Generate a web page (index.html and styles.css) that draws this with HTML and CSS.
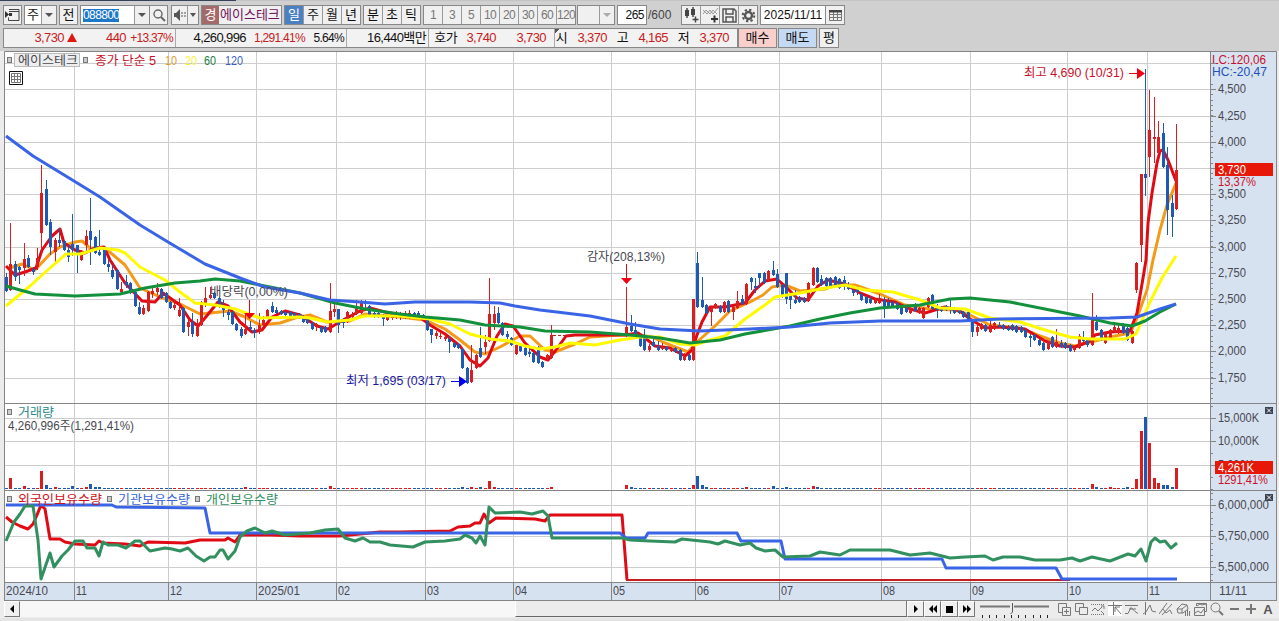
FILE: index.html
```
<!DOCTYPE html>
<html lang="ko">
<head>
	<meta charset="UTF-8">
	<title>에이스테크 차트</title>
	<link rel="stylesheet" href="styles.css">
</head>
<body>
<!-- 상단 도구모음 -->
<div class="toolbar">
	<div class="box w19"><svg width="15" height="14" viewBox="0 0 15 14"><path d="M4 1.5h10v11H3.500v-3M4 3.500h10" fill="none" stroke="#444"/><path d="M0 3v7l4-3.500zM4 5h3v3H4z" fill="#333"/></svg></div>
	<div class="box combo g1"><span>주</span><i class="arrow"></i></div>
	<div class="box w19 g1">전</div>
	<div class="box code g1"><span class="sel">088800</span><i class="arrow"></i></div>
	<div class="box w19 join"><svg width="14" height="14" viewBox="0 0 14 14" fill="none" stroke="#666"><circle cx="6" cy="6" r="4" stroke-width="1.400"/><path d="M9 9l4 4" stroke-width="2"/></svg></div>
	<div class="box sound g2"><svg width="14" height="14" viewBox="0 0 14 14"><path d="M1 5h2l4-4v12L3 9H1z" fill="#555"/><path d="M9 4v6M12 4v6" stroke="#555" stroke-dasharray="2 1"/></svg><i class="arrow small"></i></div>
	<div class="box name g1"><b>경</b><span>에이스테크</span></div>
	<div class="group g1"><span class="on">일</span><span>주</span><span>월</span><span>년</span></div>
	<div class="group g1"><span>분</span><span>초</span><span>틱</span></div>
	<div class="group nums g1"><span>1</span><span>3</span><span>5</span><span>10</span><span>20</span><span>30</span><span>60</span><span>120</span></div>
	<div class="box minute"><i class="arrow off"></i></div>
	<div class="box count g1">265</div>
	<div class="total">/600</div>
	<div class="group icons">
		<span><svg width="17" height="16" viewBox="0 0 17 16"><path d="M2 3h4v6H2zM8 2h4v6H8z" fill="#444"/><path d="M4 1v10M10 0v10M9.500 12.500h6M12.500 9.500v6" stroke="#444" stroke-width="1.500"/></svg></span>
		<span><svg width="17" height="16" viewBox="0 0 17 16"><path d="M1 3l4 4 3-4 3 4 5-6M1 7l3-4 4 4 3-4 4 4" fill="none" stroke="#888" stroke-width=".8"/><path d="M9 12h7M12.500 8.500v7" stroke="#333" stroke-width="2"/></svg></span>
		<span><svg width="15" height="15" viewBox="0 0 15 15" fill="none" stroke="#555" stroke-width="1.500"><path d="M1 1h11l2 2v11H1zM4 1v5h7V1M4 14V9h7v5"/></svg></span>
		<span><svg width="15" height="15" viewBox="0 0 15 15" fill="none" stroke="#555"><circle cx="7.500" cy="7.500" r="3.500" stroke-width="2.400"/><circle cx="7.500" cy="7.500" r="5.800" stroke-width="2" stroke-dasharray="2.300 2.250"/></svg></span>
	</div>
	<div class="box date g1"><span>2025/11/11</span></div>
	<div class="box w20 join"><svg width="13" height="12" viewBox="0 0 13 12"><path d="M.5 1.500h12v10H.5zM.5 5.500h12M.5 8.500h12M4.500 3v9M8.500 3v9" fill="none" stroke="#777"/><path d="M0 1h13v2.500H0z" fill="#444"/></svg></div>
</div>
<!-- 현재가 -->
<div class="quotes">
	<div class="quote">
		<span class="up">3,730</span><span class="up tri"><svg width="10" height="9" viewBox="0 0 10 9"><path d="M5 0l5 9H0z" fill="#e01810"/></svg></span><span class="up">440</span><span class="up end pct">+13.37%</span>
		<span>4,260,996</span><span class="up pct">1,291.41%</span><span class="end pct">5.64%</span>
		<span class="end">16,440백만</span>
		<span>호가</span><span class="up">3,740</span><span class="up">3,730</span><span class="end"></span>
		<span class="mark">시</span><span class="up">3,370</span><span>고</span><span class="up">4,165</span><span>저</span><span class="up">3,370</span>
	</div>
	<div class="box buy">매수</div>
	<div class="box sell">매도</div>
	<div class="box w20">평</div>
</div>
<!-- 차트 -->
<svg class="chart" width="1279" height="550" viewBox="0 51 1279 550">
	<rect x="4" y="51" width="1206" height="532" fill="#fff"/>
	<rect x="1210" y="51" width="66" height="550" class="side"/>
	<rect x="4" y="583" width="1207" height="18" class="side"/>
	<g id="grid"></g>
	<g id="volume"></g>
	<!-- 이동평균선 5, 10 -->
	<g class="line">
		<polyline stroke="#f59a18" points="10,268 22,264 35,270 50,254 60,247 75,242 82,241 90,248 105,248 125,265 140,288 160,297 180,304 200,314 230,311 245,317 260,325 280,323 295,318 310,315 327,322 350,321 365,314 400,317 425,320 445,329 460,340 475,352 485,354 500,347 520,336 530,336 545,350 555,352 575,344 590,337 620,335 640,335 652,337 665,343 688,352 697,342 715,326 730,311 750,302 763,295 772,287 785,285 800,291 825,289 835,285 855,285 880,294 905,305 930,309 955,310 970,315 990,325 1020,328 1040,336 1060,343 1075,346 1095,341 1115,336 1130,333 1137,318 1147,290 1153,260 1160,230 1167,205 1176,183"/>
		<polyline stroke="#e00a14" points="6,266 15,275 25,272 36,268 42,250 52,236 60,229 64,243 75,250 85,253 95,248 104,247 110,260 125,283 142,301 155,302 163,293 180,305 190,320 198,326 205,318 218,302 228,306 240,322 252,332 262,330 272,317 285,311 300,315 317,326 328,329 345,319 360,311 370,308 385,312 400,315 420,317 430,325 445,334 460,346 470,360 480,366 488,358 497,336 505,324 513,326 525,343 540,357 548,360 556,350 566,336 575,335 625,335 638,333 645,338 655,346 670,348 685,356 692,350 697,335 702,322 710,307 725,307 745,303 755,290 765,281 777,279 787,288 797,298 808,300 818,286 828,280 845,284 860,293 875,299 895,302 910,309 925,313 945,307 960,311 970,319 985,328 1000,327 1025,329 1045,341 1060,346 1075,347 1090,341 1095,335 1110,332 1130,331 1137,313 1142,284 1146,260 1148,223 1152,193 1157,163 1160,151 1163,150 1168,160 1176,181"/>
	</g>
	<g id="candles"></g>
	<path d="M553 335.500H575" stroke="#c02020" stroke-dasharray="3 2"/>
	<!-- 이동평균선 20, 60, 120 -->
	<g class="line">
		<polyline stroke="#fffa00" points="6,306 30,286 50,268 66,254 80,254 100,248 118,250 125,253 140,267 165,280 180,292 195,303 215,305 235,309 260,318 300,317 310,318 327,322 350,320 365,316 400,316 430,319 450,324 470,334 490,339 510,341 525,346 540,349 555,347 570,343 595,345 620,340 640,337 660,337 680,344 695,345 710,340 725,336 745,319 765,305 775,297 800,293 820,289 845,285 865,290 893,292 920,300 940,308 965,309 990,318 1020,322 1045,330 1070,337 1090,339 1125,339 1136,334 1150,302 1162,278 1176,256"/>
		<polyline stroke="#12903c" points="6,286 20,290 35,294 75,296 120,294 145,288 175,283 200,281 215,279 240,281 265,286 300,293 335,303 365,309 400,314 425,317 460,320 485,325 520,327 545,331 590,332 630,335 660,338 690,343 720,340 745,334 790,326 820,319 850,313 880,308 920,305 950,299 970,298 1010,302 1050,310 1080,316 1110,323 1132,326 1145,321 1160,312 1176,304"/>
		<polyline stroke="#3a64e6" points="6,136 33,156 74,181 100,197 140,225 168,242 205,264 240,278 265,287 300,293 330,300 360,302 385,304 415,302 470,302 500,303 515,306 540,310 590,316 630,324 660,329 700,331 750,329 790,327 830,323 880,321 960,321 1000,319 1110,318 1137,317 1160,309 1176,304"/>
	</g>
	<!-- 보유수량 -->
	<g class="line">
		<polyline stroke="#e00a14" points="6,517 12,522 20,526 28,529 33,524 37,515 41,505 45,509 50,539 60,539 65,542 75,544 95,545 99,541 103,543 125,544 140,546 148,542 185,543 200,540 225,540 228,538 235,542 240,535 270,535 300,536 340,536 360,534 380,532 400,532 450,531 458,527 470,526 475,523 480,523 484,514 489,523 496,518 535,519 545,521 550,515 622,515 627,580"/>
		<path d="M626 580H1070" stroke="#c41e1e" stroke-width="2"/>
		<polyline stroke="#3a64e6" points="6,505 112,505 116,507 205,508 210,533 620,533 626,538 645,538 648,533 737,533 741,541 781,541 785,559 942,559 946,568 1056,568 1062,579 1177,579"/>
		<polyline stroke="#329060" points="6,541 14,522 20,514 25,506 33,506 38,540 41,579 50,553 54,567 62,556 68,550 75,541 83,541 87,548 95,548 99,556 103,542 108,545 118,545 126,548 135,541 140,541 150,551 165,548 172,549 180,551 188,548 196,556 204,561 210,557 215,557 220,550 223,550 228,559 235,551 240,537 247,531 255,528 265,533 272,531 285,535 310,533 325,530 338,529 345,538 355,541 363,538 370,542 380,542 390,545 413,547 425,542 445,541 460,539 465,535 472,538 476,543 480,536 485,545 489,507 495,513 520,512 532,514 543,511 548,516 552,538 622,538 630,540 650,541 675,542 682,539 710,542 718,544 725,541 740,545 750,543 756,548 765,551 775,550 783,557 810,556 820,552 840,555 850,550 890,550 910,555 930,553 950,558 965,557 985,556 993,560 1003,557 1020,557 1035,560 1060,560 1072,558 1080,561 1092,557 1110,561 1128,554 1135,556 1141,549 1146,561 1151,542 1155,538 1160,542 1165,541 1171,548 1177,543"/>
	</g>
	<!-- 구획선 -->
	<path class="frame" d="M4.500 601V51.500H1276.500V601M4 403.500H1276M4 490.500H1276M4 582.500H1276M4 600.500H1276M1210.500 51V600"/>
	<!-- 범례 -->
	<rect x="14.500" y="53.500" width="65" height="13" fill="#eee" stroke="#bbb"/>
	<g class="bullet"><rect x="7.500" y="57.500" width="4" height="5"/><rect x="83.500" y="57.500" width="4" height="5"/><rect x="7.500" y="409.500" width="4" height="5"/><rect x="7.500" y="496.500" width="4" height="5"/><rect x="107.500" y="496.500" width="4" height="5"/><rect x="195.500" y="496.500" width="4" height="5"/></g>
	<g class="label">
		<text x="18" y="65" textLength="60">에이스테크</text>
		<text x="95" y="65" textLength="61" fill="#c8102a">종가 단순 5</text>
		<text x="165" y="65" textLength="12" fill="#e09a30">10</text>
		<text x="185" y="65" textLength="12" fill="#f8f040">20</text>
		<text x="204" y="65" textLength="12" fill="#208040">60</text>
		<text x="225" y="65" textLength="18" fill="#3a5ec0">120</text>
		<text x="18" y="417" textLength="36" fill="#2e8b8b">거래량</text>
		<text x="8" y="430" textLength="126">4,260,996주(1,291,41%)</text>
		<text x="18" y="504" textLength="84" fill="#d01020">외국인보유수량</text>
		<text x="118" y="504" textLength="72" fill="#3a64d6">기관보유수량</text>
		<text x="206" y="504" textLength="72" fill="#329060">개인보유수량</text>
		<text x="1024" y="77" textLength="100" fill="#c8102a">최고 4,690 (10/31)</text>
		<text x="346" y="385" textLength="100" fill="#1a1aa0">최저 1,695 (03/17)</text>
		<text x="587" y="261" textLength="78">감자(208,13%)</text>
		<text x="210" y="296" textLength="78">배당락(0,00%)</text>
		<text x="1212" y="64" textLength="54" fill="#c8102a">LC:120,06</text>
		<text x="1212" y="76" textLength="55" fill="#2050b8">HC:-20,47</text>
	</g>
	<path d="M1129 73.500h10M626.500 264v16M249.500 300v14" stroke="#e00a14"/>
	<path d="M1137 68l8 5.500-8 5.500zM621 278h11l-5.500 6zM244 313h11l-5.500 6z" fill="#f00010"/>
	<path d="M451 381.500h10" stroke="#0000d0"/>
	<path d="M459 376l8 5.500-8 5.500z" fill="#0000f0"/>
	<!-- 표 보기 단추 -->
	<path d="M9.500 71.500h13v13h-13z" fill="#fff" stroke="#111"/>
	<path d="M11.500 73.500h9v9h-9zM11.500 76.500h9M11.500 79.500h9M14.500 74v9M17.500 74v9" fill="none" stroke="#777"/>
	<g id="axis" class="label"></g>
	<!-- 현재값 표시 -->
	<rect x="1215" y="163" width="58" height="13" fill="#e81808"/>
	<rect x="1215" y="461" width="58" height="13" fill="#e81808"/>
	<g class="label">
		<text x="1218" y="174" textLength="28" fill="#fff">3,730</text>
		<text x="1218" y="186" textLength="38" fill="#c8102a">13,37%</text>
		<text x="1218" y="472" textLength="36" fill="#fff">4,261K</text>
		<text x="1218" y="484" textLength="50" fill="#c8102a">1291,41%</text>
	</g>
	<path d="M1265 407h8v7h-8zM1265 494h8v7h-8z" fill="#3c4450"/>
	<path d="M1267 408.500l4 4m0-4l-4 4M1267 495.500l4 4m0-4l-4 4" stroke="#fff"/>
</svg>
<!-- 하단 스크롤 -->
<div class="footer">
	<div class="scroll">
		<div class="btn"><svg width="6" height="8" viewBox="0 0 6 8"><path d="M5 0v8L1 4z"/></svg></div>
		<div class="track"></div>
		<div class="thumb"></div>
		<div class="btn"><svg width="6" height="8" viewBox="0 0 6 8"><path d="M1 0v8l4-4z"/></svg></div>
		<div class="btn"><svg width="10" height="8" viewBox="0 0 10 8"><path d="M5 0v8L1 4zM9 0v8L5 4z"/></svg></div>
		<div class="btn"><svg width="7" height="7" viewBox="0 0 7 7"><path d="M0 0h7v7H0z"/></svg></div>
		<div class="btn"><svg width="10" height="8" viewBox="0 0 10 8"><path d="M1 0v8l4-4zM5 0v8l4-4z"/></svg></div>
	</div>
	<svg class="slider" width="70" height="18" viewBox="0 0 70 18" fill="none"><path d="M0 5.500h30M34 5.500h35" stroke="#777" stroke-width="2"/><path d="M32.500 2v9l-2 2" stroke="#555"/><path d="M2.500 14v3M9.500 14v3M16.500 14v3M24.500 14v3M31.500 14v3M38.500 14v3M45.500 14v3M53.500 14v3M60.500 14v3M67.500 14v3" stroke="#222"/></svg>
	<div class="tools">
		<svg viewBox="0 0 14 14"><path d="M5 10.500H1.500v-9h8V5M5.500 5.500h8v8h-8zM9.500 7v5M7 9.500h5"/></svg>
		<svg viewBox="0 0 14 14"><path d="M5 9.500H1.500v-8h8V5M5.500 5.500h8v7h-8z"/></svg>
		<svg viewBox="0 0 14 14"><path d="M0 2.500h13M0 12.500h13" stroke-dasharray="1 1"/><path d="M1 9l3-3 3 3 4-4M10 4h3v3M10 9l3 3"/></svg>
		<svg class="picked" viewBox="0 0 14 14"><path d="M0 3.500h14M5.500 0v13M7 5l6 7M7 5v5M7 5h5"/></svg>
		<svg viewBox="0 0 14 14"><path d="M0 3.500h13M0 11.500h3l3-6 4 4 3 2M4 7h7"/></svg>
		<svg viewBox="0 0 14 14"><path d="M3.500 0v13M1 12l3-2 4-7 2 6 4 1"/></svg>
		<svg viewBox="0 0 14 14"><path d="M0 12L8 1M3 13L13 2M4 7l3 4 4-3 2 4"/></svg>
		<svg viewBox="0 0 14 14"><path d="M1 7l5-5 5 1 1 4-5 4H2zM1 7h5l5-4M6 7v4M9.500 9v5M11.500 8v6M13.500 9v5"/></svg>
		<svg viewBox="0 0 14 14"><path d="M3.500 4V1.500h10v8H12M1.500 5.500h10v8h-10zM2 11l3-2 3 2 3-4M4 4l3-2 2 1 4-1"/></svg>
		<svg viewBox="0 0 14 14"><circle cx="5.500" cy="5.500" r="4.500"/><path d="M9 9l4 4" stroke-width="2"/></svg>
		<svg viewBox="0 0 14 14"><path d="M3 7h9" stroke-width="2"/></svg>
		<svg viewBox="0 0 14 14"><path d="M2 7h10M7 2v10" stroke-width="2"/></svg>
		<span>A</span>
	</div>
</div>
<script src="chart.js"></script>
</body>
</html>
```
FILE: styles.css
```
* {
	box-sizing: border-box;
}
body {
	margin: 0;
	background: #ececec;
	font-family: "Liberation Sans", "Noto Sans CJK KR", sans-serif;
	font-size: 13px;
	line-height: 18px;
	color: #111;
	overflow: hidden;
}
/* 상단 도구모음 */
.toolbar {
	display: flex;
	height: 28px;
	padding: 5px 0 3px 3px;
	background: linear-gradient(to right, #36425c 236px, #c4c4c4 236px) top / 100% 1px no-repeat #d0d0d0;
}
.box {
	display: flex;
	align-items: center;
	justify-content: center;
	height: 20px;
	border: 1px solid #888;
	background: #f0f0f0;
	white-space: nowrap;
}
.w19 { width: 19px; }
.w20 { width: 20px; }
.g1 { margin-left: 2px; }
.g2 { margin-left: 3px; }
.join { margin-left: -1px; }
.arrow {
	display: flex;
	align-items: center;
	justify-content: center;
	width: 15px;
	height: 18px;
	border-left: 1px solid #999;
	background: #f0f0f0;
}
.arrow:after {
	content: "";
	border: 4px solid transparent;
	border-top: 4px solid #555;
	border-bottom: 0;
}
.arrow.small { width: 11px; }
.arrow.small:after { border-width: 4px 3px 0; }
.arrow.off:after { border-top-color: #aaa; }
.combo {
	width: 33px;
	background: #fff;
}
.combo span {
	flex: 1;
	text-align: center;
}
.code {
	width: 70px;
	background: #fff;
	justify-content: space-between;
	padding-left: 2px;
}
.sel {
	background: #1e78c8;
	color: #fff;
	font-size: 12px;
	line-height: 13px;
	letter-spacing: -0.6px;
}
.sound { width: 28px; }
.name {
	width: 81px;
	color: #701060;
	justify-content: flex-start;
}
.name b {
	width: 17px;
	background: #a46a6a;
	color: #fff;
	font-weight: normal;
	text-align: center;
}
.name span { margin-left: 1px; }
.group {
	display: flex;
	height: 20px;
	border: 1px solid #888;
	background: #f0f0f0;
}
.group span {
	display: flex;
	align-items: center;
	justify-content: center;
	width: 19px;
	border-right: 1px solid #999;
}
.group span:last-child {
	width: 18px;
	border-right: 0;
}
.group .on {
	background: #4a80c4;
	color: #fff;
}
.nums span {
	color: #777;
	font-size: 12px;
	letter-spacing: -0.6px;
}
.minute {
	width: 38px;
	margin-left: 1px;
	justify-content: flex-end;
}
.count {
	width: 30px;
	background: #fff;
	justify-content: flex-end;
	padding-right: 2px;
	font-size: 12px;
	letter-spacing: -0.5px;
}
.total {
	width: 34px;
	padding: 1px 0 0 1px;
	font-size: 12px;
	color: #444;
}
.icons span { overflow: hidden; }
.date {
	width: 66px;
	background: #fff;
	font-size: 12px;
}
/* 현재가 줄 */
.quotes {
	display: flex;
	height: 23px;
	padding-left: 3px;
	background: #d0d0d0;
}
.quote {
	display: grid;
	grid-template-columns: 60px 14px 48px 50px 70px 59px 42px 82px 28px 39px 50px 9px 12px 40px 21px 40px 21px 40px;
	width: 735px;
	height: 20px;
	border: 1px solid #888;
	background: #f2f2f2;
	text-align: right;
	letter-spacing: -0.6px;
	white-space: nowrap;
}
.quote .up { color: #c82020; }
.quote .pct {
	font-size: 12px;
	letter-spacing: -0.7px;
}
.quote .tri {
	padding-right: 1px;
}
.quote .end {
	padding-right: 2px;
	border-right: 1px solid #aaa;
}
.mark { background: linear-gradient(135deg, #555 3px, transparent 3px); }
.buy {
	width: 39px;
	background: #f8cfcb;
}
.sell {
	width: 39px;
	background: #c4daf4;
	margin-right: 2px;
	margin-left: 1px;
}
/* 차트 */
.chart {
	display: block;
}
.side { fill: #d7e2f0; }
.frame {
	fill: none;
	stroke: #858585;
}
.line {
	fill: none;
	stroke-width: 3;
	stroke-linejoin: round;
}
.label {
	fill: #484850;
	font-size: 12.5px;
}
.bullet rect {
	fill: #ccc;
	stroke: #777;
}
.grid { stroke: #cdcdcd; }
.tick { stroke: #858585; }
.rise { fill: #d81e1e; }
.fall { fill: #1e5ab4; }
/* 하단 */
.footer {
	display: flex;
	height: 20px;
	background: #ececec;
	border-bottom: 3px solid #e4e4e4;
}
.scroll {
	display: flex;
	width: 971px;
	margin-left: 4px;
	height: 16px;
}
.btn {
	display: flex;
	align-items: center;
	justify-content: center;
	width: 17px;
	background: #f0f0f0;
	border: 1px solid #fff;
	border-right-color: #777;
	border-bottom-color: #777;
}
.btn:first-child { width: 16px; }
.track {
	width: 495px;
	background: #f7f7f7;
}
.thumb {
	flex: 1;
	background: #ececec;
	border-left: 1px solid #fff;
	border-right: 1px solid #777;
	border-bottom: 1px solid #666;
}
.slider { margin-left: 5px; }
.tools {
	display: flex;
	gap: 3px;
	margin-left: 7px;
	padding-top: 1px;
}
.tools svg {
	width: 14px;
	height: 14px;
	fill: none;
	stroke: #777;
}
.tools .picked {
	background: #fff;
}
.tools span {
	width: 14px;
	font-weight: bold;
	line-height: 16px;
	text-align: center;
	color: #555;
}
```
FILE: chart.js
```
var ns = "http://www.w3.org/2000/svg";
function add(parent, tag, attrs, text) {
	var el = document.createElementNS(ns, tag);
	for (var k in attrs) el.setAttribute(k, attrs[k]);
	if (text) el.textContent = text;
	document.getElementById(parent).appendChild(el);
}
function line(parent, cls, x1, y1, x2, y2) {
	add(parent, "line", { "class": cls, x1: x1, y1: y1, x2: x2, y2: y2 });
}

// 월 구분선
var months = [[4, "2024/10", 42], [74, "11", 11], [168, "12", 12], [256, "2025/01", 42], [336, "02", 12], [425, "03", 12],
	[513, "04", 12], [611, "05", 12], [695, "06", 12], [779, "07", 12], [881, "08", 12], [970, "09", 12], [1067, "10", 12], [1147, "11", 11]];
months.forEach(function (m, i) {
	if (i) {
		line("grid", "grid", m[0] + .5, 52, m[0] + .5, 582);
		line("grid", "tick", m[0] + .5, 583, m[0] + .5, 600);
	}
	add("axis", "text", { x: m[0] + 2, y: 595, textLength: m[2] }, m[1]);
});
add("axis", "text", { x: 1219, y: 595, textLength: 28 }, "11/11");

// 가격, 거래량, 보유수량 눈금
var rows = [[63, ""], [89, "4,500"], [116, "4,250"], [142, "4,000"], [168, ""], [194, "3,500"], [220, "3,250"], [247, "3,000"],
	[273, "2,750"], [299, "2,500"], [325, "2,250"], [351, "2,000"], [378, "1,750"],
	[418, "15,000K"], [441, "10,000K"], [465, "5,000K"], [505, "6,000,000"], [536, "5,750,000"], [567, "5,500,000"]];
rows.forEach(function (r) {
	line("grid", "grid", 5, r[0] + .5, 1210, r[0] + .5);
	line("axis", "tick", 1211, r[0] + .5, 1216, r[0] + .5);
	if (r[1]) add("axis", "text", { x: 1218, y: r[0] + 4, textLength: r[1].length == 5 ? 28 : r[1].length == 6 ? 35 : r[1].length == 7 ? 41 : 51 }, r[1]);
});
function ticks(from, to, step) {
	for (var y = from; y < to; y += step) line("axis", "tick", 1211, Math.round(y) + .5, 1213, Math.round(y) + .5);
}
ticks(84, 400, 5.24);
ticks(406, 490, 11.8);
ticks(493, 582, 6.2);

// 봉: 방향, 몸통 위, 몸통 아래, 고가, 저가
var bars = ("b277,291,273 r264,290,223 b264,277,261,281 b267,270,266,284 r259,268,243,276 b258,267,255 b269,272,267,275 r258,267,248,270 r193,233,165,255 b189,225,180 " +
	"b222,247,219,255 r240,252,238,262 b240,243,228,247 b241,250 b250,257,245,262 b244,250,214,256 b245,255,245,273 r251,260 r236,245,230,252 b231,240,198,265 " +
	"b237,253 b252,255,230 b247,264 b264,267,260,272 b270,277,265,279 b270,289 r289,292,282,295 b282,285,275,288 b283,293 b292,306 " +
	"b307,314,302 r308,314,305 r292,311 r291,294,287,298 r288,292,283,295 b289,298 b293,302 b302,308 r305,308,300,310 r310,316,298 " +
	"b308,332 r322,327,320,336 b322,334,313,337 r327,336,319 r302,325 r298,303,287,307 r295,298,287 b293,298 b298,307 b307,310,300,317 " +
	"b312,315,307,320 b312,324 b324,330 b329,336,327,338 r329,334,312 b327,329,321,331 b330,333,328,338 r325,332,313,334 r320,325,316 r310,318 " +
	"b306,312,302 b310,313,307 b311,314 b312,315 b312,316 b313,317 b314,318 b316,322 b318,323 b323,329 " +
	"r324,327,323,331 b327,332 b327,332 r311,332,283 r309,312,302,317 b309,325,309,333 b321,323,318,328 r312,322 r315,317,312 r308,314,300 " +
	"r303,313,300 b301,304,300,310 b306,316 b313,317 b313,317 b317,319,314,326 r316,320 r315,318,312,320 r314,317,311,319 r314,317,312,320 " +
	"r313,317,311,319 r313,316,310,319 b313,316 b313,316,311 b315,319 b320,330 b329,335,329,343 r333,336,331,339 r336,337,333,339 r337,339,334,341 " +
	"b339,342,336,353 b343,347 b344,348 b349,368 b368,383 r370,382,345 r355,368 b348,357,327 r342,347,335,354 r314,341,278 " +
	"r314,323,306,330 b313,323,307 b323,335 b334,337,331,339 b338,345 r345,354 b346,351 b348,355 b352,354,348,357 b353,362 " +
	"b347,363 b362,367 r355,359 r335,358,325 - - - - - - - - - - - - - - - - " +
	"r327,336,287 b326,331,315 b330,335,322 b336,346 b337,350,329 r346,350,344,352 b342,346,338 b346,350,341 r347,349,343 b347,350 " +
	"r348,351 b348,352 b350,360 r357,360,353 b355,360 r299,360,299,361 b263,307,252 b300,307,277 b305,313 r307,312,307,326 " +
	"r304,308 b306,312 r302,312 b301,312 r307,312,306,320 r301,308,291 b299,304,295 r284,304 b278,282,277,290 b286,288,278,293 " +
	"b273,278,273,288 b273,283 r271,280 b270,275,261 b274,287,269 b285,297 b273,299,273,304 b295,300,294,309 b300,303,290 b297,302 " +
	"b298,302 r283,301 r268,285 b268,282 b279,285,275 b278,286 b278,287 b277,286 b279,288 b280,285,276,290 " +
	"b285,289,282 b290,293,287,296 b289,292,286,295 b294,300 b297,303 b299,303,296 r299,303 r298,303,294 b300,307,297,318 b302,306,298 " +
	"b302,307 b303,309 b307,314 b308,312 r308,313 b304,311 r308,313 r308,318 r298,307 b295,309 " +
	"b306,310,304,318 b307,311 b306,310 b308,310,300,314 b308,313 b310,313 b312,317 b312,320 b320,332,320,337 r327,332,324,336 " +
	"r324,329 b325,331 r325,332,317 r323,329 b325,327,322 b325,329 b328,330,325 b325,330 b326,332 b327,332 " +
	"b330,337 b336,338,334,347 b335,340 b340,345 b343,350 r342,349 b337,347 r342,347,329 b343,347,340 b343,348 " +
	"b345,351 r348,350,346,352 r336,348,334 b339,341,331 b340,345,338,347 r318,345,293 b322,330,315 b330,340 r333,343 r330,338 " +
	"r327,332,322 r328,333,323 b324,333 b328,340 r331,343 r263,290,262,293 r174,245,174,262 b174,178,69,196 r130,157,90,177 r137,139,97,163 " +
	"r137,153,121 b133,167,123 b165,210,147,235 b203,217,195,237 r170,209,124").split(" ");
// 거래량이 많은 날
var vol = { 1: 11, 4: 3, 8: 18, 9: 4, 11: 2, 15: 3, 18: 2, 19: 5, 20: 2, 21: 2, 54: 2, 73: 3, 103: 2, 105: 2, 107: 2, 109: 8, 110: 2, 123: 2, 140: 4, 141: 2, 155: 4, 156: 13, 157: 4,
	158: 2, 167: 2, 173: 3, 176: 2, 182: 3, 183: 2, 245: 5, 246: 2, 249: 2, 253: 2, 255: 10, 256: 58, 257: 72, 258: 46, 259: 11, 260: 6, 261: 4, 262: 4, 263: 2, 264: 21 };
bars.forEach(function (b, i) {
	if (b == "-") return;
	var x = Math.round(6 + i * 4.432);
	var cls = b.charAt(0) == "r" ? "rise" : "fall";
	var v = b.slice(1).split(",").map(Number);
	var hi = v[2] || v[0] - 1, lo = v[3] || v[1] + 1;
	add("candles", "rect", { "class": cls, x: x, y: hi, width: 1, height: lo - hi });
	add("candles", "rect", { "class": cls, x: x - 1, y: v[0], width: 3, height: v[1] - v[0] });
	var h = vol[i] || 1;
	add("volume", "rect", { "class": cls, x: x - 1, y: 489 - h, width: 3, height: h });
});

// 글자 폭을 칸에 맞춤
document.querySelectorAll(".label text").forEach(function (t) {
	t.setAttribute("lengthAdjust", "spacingAndGlyphs");
});
```
